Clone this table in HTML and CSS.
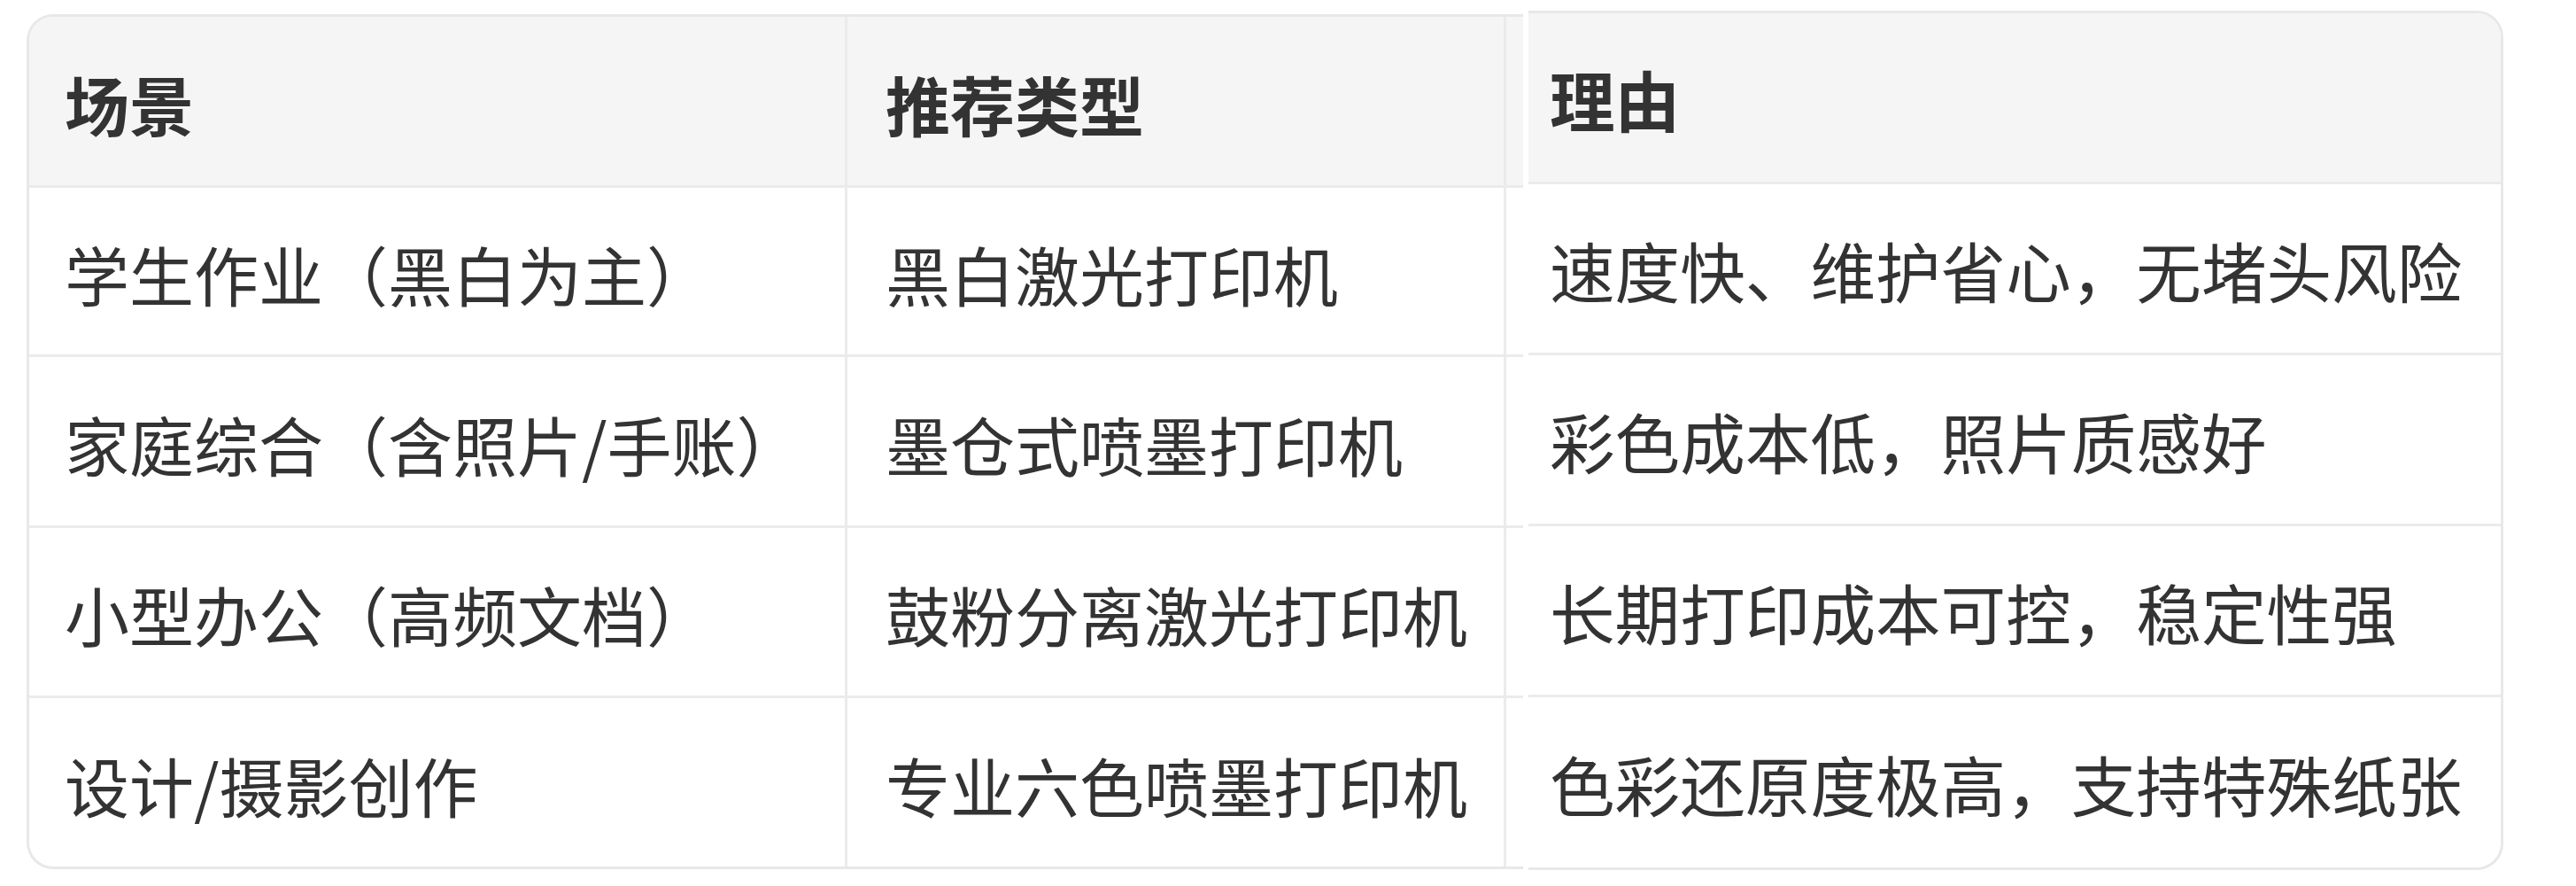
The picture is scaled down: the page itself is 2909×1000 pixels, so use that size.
FILE: index.html
```html
<!DOCTYPE html>
<html lang="zh-CN">
<head>
<meta charset="utf-8">
<title>打印机选购建议</title>
<link rel="stylesheet" href="styles.css">
</head>
<body>
<div class="page">
  <div class="card card-left">
    <div class="cell head col1">场景</div>
    <div class="cell head col2">推荐类型</div>
    <div class="cell head sliver"></div>

    <div class="cell col1">学生作业（黑白为主）</div>
    <div class="cell col2">黑白激光打印机</div>
    <div class="cell sliver"></div>

    <div class="cell col1">家庭综合（含照片/手账）</div>
    <div class="cell col2">墨仓式喷墨打印机</div>
    <div class="cell sliver"></div>

    <div class="cell col1">小型办公（高频文档）</div>
    <div class="cell col2">鼓粉分离激光打印机</div>
    <div class="cell sliver"></div>

    <div class="cell last col1">设计/摄影创作</div>
    <div class="cell last col2">专业六色喷墨打印机</div>
    <div class="cell last sliver"></div>
  </div>

  <div class="card card-right">
    <div class="cell head reason">理由</div>
    <div class="cell reason">速度快、维护省心，无堵头风险</div>
    <div class="cell reason">彩色成本低，照片质感好</div>
    <div class="cell reason">长期打印成本可控，稳定性强</div>
    <div class="cell last reason">色彩还原度极高，支持特殊纸张</div>
  </div>
</div>
</body>
</html>
```

FILE: styles.css
```css
* {
  box-sizing: border-box;
}

html, body {
  margin: 0;
  padding: 0;
  background: #ffffff;
}

body {
  font-family: "Noto Sans CJK SC", "Noto Sans", sans-serif;
  color: #333333;
  font-size: 73.6px;
}

.page {
  display: flex;
  align-items: flex-start;
  padding-left: 30px;
}

.card {
  display: grid;
  border: 3px solid #e8e8e8;
  overflow: hidden;
  background: #ffffff;
}

.card-left {
  width: 1690px;
  margin-top: 16px;
  border-right: none;
  border-radius: 30px 0 0 30px;
  grid-template-columns: 924px 744px 1fr;
  grid-template-rows: 193px 191px 193px 192px 190px;
  font-size: 73px;
}

.card-right {
  width: 1101px;
  margin-top: 12px;
  margin-left: 6px;
  border-left: none;
  border-radius: 0 30px 30px 0;
  grid-template-columns: 1fr;
  grid-template-rows: 193px 193px 193px 193px 192px;
}

.cell {
  display: flex;
  align-items: center;
  white-space: nowrap;
  border-bottom: 3px solid #ebebeb;
  line-height: 1;
  padding-top: 4px;
}

.cell.last {
  border-bottom: none;
}

.head {
  background: #f5f5f5;
  font-weight: 700;
}

.col1 {
  padding-left: 40px;
  border-right: 3px solid #ebebeb;
}

.col2 {
  padding-left: 43px;
  border-right: 3px solid #ebebeb;
}

.reason {
  padding-left: 24px;
}
```
